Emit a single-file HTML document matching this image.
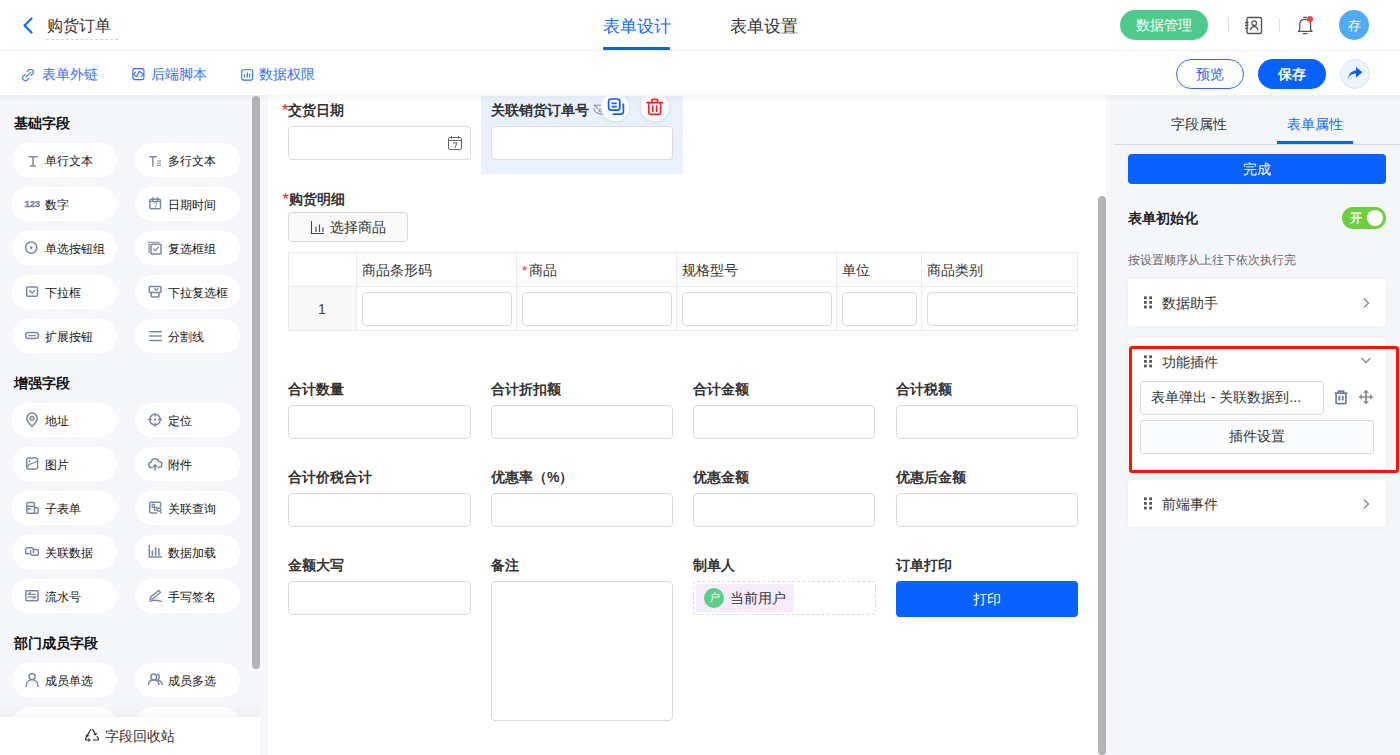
<!DOCTYPE html>
<html><head><meta charset="utf-8">
<style>
*{box-sizing:border-box;margin:0;padding:0}
html,body{width:1400px;height:755px;overflow:hidden;background:#fff;font-family:"Liberation Sans",sans-serif;color:#333}
.a{position:absolute}
.t{position:absolute;white-space:nowrap;line-height:1}
#hdr{left:0;top:0;width:1400px;height:51px;background:#fff;border-bottom:1px solid #f0f0f0}
#tb{left:0;top:51px;width:1400px;height:44px;background:#fff}
#left{left:0;top:95px;width:268px;height:660px;background:#f5f6fa}
#canvas{left:268px;top:95px;width:838px;height:660px;background:#fff;overflow:hidden}
#right{left:1106px;top:95px;width:294px;height:660px;background:#f5f6fa}
#shadow{left:0;top:95px;width:1400px;height:8px;background:linear-gradient(rgba(0,0,0,0.03),rgba(0,0,0,0))}
.pill{position:absolute;width:105px;height:34px;border-radius:17px;background:#fff}
.pill .ic{position:absolute;left:12px;top:9px;width:16px;height:16px}
.pill span{position:absolute;left:33px;top:11px;font-size:12px;line-height:14px;color:#151515;white-space:nowrap}
.sec{position:absolute;left:14px;font-size:14px;font-weight:bold;color:#111;line-height:14px}
.lbl{position:absolute;font-size:14px;font-weight:bold;color:#333;line-height:14px;white-space:nowrap}
.inp{position:absolute;width:183px;height:34px;border:1px solid #dcdcdc;border-radius:4px;background:#fff}
</style></head><body>
<div id="hdr" class="a">
<svg class="a" style="left:21px;top:16px" width="14" height="19" viewBox="0 0 14 19"><path d="M10.5 2.5 L3.5 9.5 L10.5 16.5" fill="none" stroke="#1667ff" stroke-width="2.2" stroke-linecap="round" stroke-linejoin="round"/></svg>
<div class="t" style="left:47px;top:17px;font-size:16.3px;color:#333">购货订单</div>
<div class="a" style="left:46px;top:39px;width:72px;height:0;border-top:1px dashed #d4d4d4"></div>
<div class="t" style="left:603px;top:18px;font-size:16.5px;color:#1667ff">表单设计</div>
<div class="a" style="left:603px;top:47px;width:67px;height:3px;background:#0a61ff;border-radius:1px"></div>
<div class="t" style="left:730px;top:18px;font-size:16.5px;color:#333">表单设置</div>
<div class="a" style="left:1120px;top:10px;width:88px;height:30px;border-radius:15px;background:#4ecb8b"></div>
<div class="t" style="left:1136px;top:18px;font-size:14px;color:#fff">数据管理</div>
<div class="a" style="left:1228px;top:18px;width:1px;height:14px;background:#e0e0e0"></div>
<div class="a" style="left:1279px;top:18px;width:1px;height:14px;background:#e0e0e0"></div>
<div class="a" style="left:1339px;top:10px;width:30px;height:30px;border-radius:15px;background:#4eabf4"></div>
<div class="t" style="left:1347.5px;top:19px;font-size:13px;color:#fff">存</div>
<svg class="a" style="left:1240px;top:12px" width="26" height="26" viewBox="0 0 26 26"><rect x="7" y="5.5" width="14.5" height="16" rx="1.5" fill="none" stroke="#555" stroke-width="1.4"/><path d="M5 10.5h3.5M5 13.4h3.5M5 16.4h3.5" stroke="#555" stroke-width="1.3"/><circle cx="14.2" cy="11.2" r="2.3" fill="none" stroke="#555" stroke-width="1.3"/><path d="M10.6 18.2c0.3-2.2 1.6-3.6 3.6-3.6s3.3 1.4 3.6 3.6" fill="none" stroke="#555" stroke-width="1.3"/></svg>
<svg class="a" style="left:1292px;top:12px" width="26" height="26" viewBox="0 0 26 26"><g fill="none" stroke="#555" stroke-width="1.3" stroke-linecap="round" stroke-linejoin="round"><path d="M11.8 5.3h2.6"/><path d="M6.4 19.3Q7.8 18.4 7.8 16.4V12Q7.8 7.4 13.2 7.4Q18.6 7.4 18.6 12V16.4Q18.6 18.4 20 19.3Z"/><path d="M11.3 21.6h3.6"/></g><circle cx="18" cy="6.9" r="3" fill="#e5484d"/></svg>
</div>
<div id="tb" class="a">
<svg class="a" style="left:21px;top:17px" width="15" height="14" viewBox="0 0 15 14"><g fill="none" stroke="#3370ff" stroke-width="1.1" stroke-linecap="round"><path d="M6.2 3.6l1.6-1.6a2.7 2.7 0 0 1 3.8 3.8l-1.6 1.6"/><path d="M7.8 10.4l-1.6 1.6a2.7 2.7 0 0 1-3.8-3.8l1.6-1.6"/><path d="M5 9l4.4-4.4"/></g></svg>
<div class="t" style="left:42px;top:16px;font-size:14px;color:#3370ff">表单外链</div>
<svg class="a" style="left:131px;top:16px" width="14" height="14" viewBox="0 0 14 14"><g fill="none" stroke="#2f6cff" stroke-width="1.1" stroke-linejoin="round" stroke-linecap="round"><rect x="1.9" y="1.6" width="11" height="11" rx="1.6"/><path d="M2.2 7.4L4.6 5.2M2.2 7.4l3.4 2.2 2.8-5.4 4.2 3.2-2.6 2.2"/></g></svg>
<div class="t" style="left:151px;top:16px;font-size:14px;color:#3370ff">后端脚本</div>
<svg class="a" style="left:240px;top:16px" width="14" height="14" viewBox="0 0 14 14"><g fill="none" stroke="#2f6cff" stroke-width="1.1"><rect x="1.7" y="2.7" width="11" height="10.4" rx="1.8"/><path d="M4.5 7.4v3.2M7.3 5.4v5.2M9.6 6.8v3.8" stroke-width="1.2"/></g></svg>
<div class="t" style="left:259px;top:16px;font-size:14px;color:#3370ff">数据权限</div>
<div class="a" style="left:1176px;top:8px;width:68px;height:30px;border-radius:15px;border:1px solid #2f6cf6;background:#fff"></div>
<div class="t" style="left:1196px;top:16px;font-size:14px;color:#2563f5">预览</div>
<div class="a" style="left:1258px;top:8px;width:68px;height:30px;border-radius:15px;background:#0661fd"></div>
<div class="t" style="left:1278px;top:16px;font-size:14px;color:#fff;font-weight:bold">保存</div>
<div class="a" style="left:1340px;top:8px;width:30px;height:30px;border-radius:15px;background:#eef4fe;border:1px solid #d6e4fc"></div>
<svg class="a" style="left:1346px;top:15px" width="18" height="16" viewBox="0 0 18 16"><path d="M2 14.4C2.4 9.8 5.6 7.6 10 7.6V11.6L16.4 6.2 10 0.9V4.4C4.8 4.8 2 8.6 2 14.4Z" fill="#0a5cff"/></svg>
</div>
<div id="left" class="a">
<div class="sec" style="top:21px">基础字段</div>
<div class="pill" style="left:12px;top:48px"><svg class="ic" width="16" height="16" viewBox="0 0 16 16"><g fill="none" stroke="#7b89a2" stroke-width="1.5" stroke-linecap="round" stroke-linejoin="round"><path d="M5 4.8h8M9 4.8v9.2M6.6 14h4.8"/></g></svg><span>单行文本</span></div>
<div class="pill" style="left:135px;top:48px"><svg class="ic" width="16" height="16" viewBox="0 0 16 16"><g fill="none" stroke="#7b89a2" stroke-width="1.5" stroke-linecap="round" stroke-linejoin="round"><path d="M2.6 4.8h6.6M5.9 4.8v9.2" stroke-width="1.4"/><path d="M10.6 9h3.2M10.6 11.2h3.2M10.6 13.4h3.2" stroke-width="1"/></g></svg><span>多行文本</span></div>
<div class="pill" style="left:12px;top:92px"><svg class="ic" width="16" height="16" viewBox="0 0 16 16"><text x="0.4" y="11.4" font-family="Liberation Sans" font-weight="700" font-size="9.6" fill="#7b89a2" stroke="#7b89a2" stroke-width="0.35" letter-spacing="-0.1">123</text></svg><span>数字</span></div>
<div class="pill" style="left:135px;top:92px"><svg class="ic" width="16" height="16" viewBox="0 0 16 16"><g fill="none" stroke="#7b89a2" stroke-width="1.5" stroke-linecap="round" stroke-linejoin="round"><rect x="2.9" y="3.2" width="10.6" height="9.6" rx="1.4"/><path d="M2.9 5.4h10.6" stroke-width="1.2"/><path d="M5.9 1.8v3M10.4 1.8v3" stroke-width="1.4"/><path d="M6.6 6.8h3.2L8.2 11.6" stroke-width="1.1" stroke-opacity="0.8"/></g></svg><span>日期时间</span></div>
<div class="pill" style="left:12px;top:136px"><svg class="ic" width="16" height="16" viewBox="0 0 16 16"><g fill="none" stroke="#7b89a2" stroke-width="1.5" stroke-linecap="round" stroke-linejoin="round"><circle cx="7.2" cy="7.6" r="5.6"/></g><circle cx="7.2" cy="7.6" r="1.4" fill="#7b89a2"/></svg><span>单选按钮组</span></div>
<div class="pill" style="left:135px;top:136px"><svg class="ic" width="16" height="16" viewBox="0 0 16 16"><g fill="none" stroke="#7b89a2" stroke-width="1.5" stroke-linecap="round" stroke-linejoin="round"><path d="M2 12.6V2.2h10.4" stroke-width="1.1"/><rect x="4" y="4.2" width="10" height="9.8" rx="0.8"/><path d="M6.4 8.8l1.8 1.8 3.4-3.6" stroke-width="1.1"/></g></svg><span>复选框组</span></div>
<div class="pill" style="left:12px;top:180px"><svg class="ic" width="16" height="16" viewBox="0 0 16 16"><g fill="none" stroke="#7b89a2" stroke-width="1.5" stroke-linecap="round" stroke-linejoin="round"><rect x="2.7" y="2.9" width="10.8" height="9.3" rx="1"/><path d="M5.6 6.4L8.1 8.9 10.6 6.4" stroke-width="1.4"/></g></svg><span>下拉框</span></div>
<div class="pill" style="left:135px;top:180px"><svg class="ic" width="16" height="16" viewBox="0 0 16 16"><g fill="none" stroke="#7b89a2" stroke-width="1.5" stroke-linecap="round" stroke-linejoin="round"><rect x="2.2" y="2.6" width="11.8" height="5.8" rx="1.2"/><path d="M4.2 8.4v3.6a1 1 0 0 0 1 1h5.8a1 1 0 0 0 1-1V8.4"/><path d="M7.8 4.8l1.5 1.5 1.5-1.5" stroke-width="1.3"/></g></svg><span>下拉复选框</span></div>
<div class="pill" style="left:12px;top:224px"><svg class="ic" width="16" height="16" viewBox="0 0 16 16"><g fill="none" stroke="#7b89a2" stroke-width="1.5" stroke-linecap="round" stroke-linejoin="round"><rect x="1.6" y="4.6" width="12.9" height="6" rx="3"/><path d="M4.6 7.65h7" stroke-width="1.4"/></g></svg><span>扩展按钮</span></div>
<div class="pill" style="left:135px;top:224px"><svg class="ic" width="16" height="16" viewBox="0 0 16 16"><g fill="none" stroke="#7b89a2" stroke-width="1.5" stroke-linecap="round" stroke-linejoin="round" stroke-linecap="butt"><path d="M2.6 3.7h11.8M2.6 12.4h11.8" stroke-width="1.5"/><path d="M2.8 8.07h2.9M7 8.07h2.7M11.2 8.07h3" stroke-width="1.5"/></g></svg><span>分割线</span></div>
<div class="sec" style="top:281px">增强字段</div>
<div class="pill" style="left:12px;top:308px"><svg class="ic" width="16" height="16" viewBox="0 0 16 16"><g fill="none" stroke="#7b89a2" stroke-width="1.5" stroke-linecap="round" stroke-linejoin="round"><path d="M8 14.4C5 11.6 2.8 8.9 2.8 6.3a5.2 5.2 0 0 1 10.4 0c0 2.6-2.2 5.3-5.2 8.1z"/><circle cx="8" cy="6.3" r="1.9"/></g></svg><span>地址</span></div>
<div class="pill" style="left:135px;top:308px"><svg class="ic" width="16" height="16" viewBox="0 0 16 16"><g fill="none" stroke="#7b89a2" stroke-width="1.5" stroke-linecap="round" stroke-linejoin="round"><circle cx="8" cy="7.6" r="5.3"/><path d="M8 1.4v2.6M8 11.2v3M1.4 7.6h3M11.4 7.6h3.2"/></g><rect x="7" y="6.6" width="2" height="2" fill="#7b89a2"/></svg><span>定位</span></div>
<div class="pill" style="left:12px;top:352px"><svg class="ic" width="16" height="16" viewBox="0 0 16 16"><g fill="none" stroke="#7b89a2" stroke-width="1.5" stroke-linecap="round" stroke-linejoin="round"><rect x="2.7" y="1.9" width="10.9" height="11" rx="2"/><path d="M3.4 10.6C4.6 8.6 5.6 7.6 8 7.3S11 6.6 12.4 5.4" stroke-width="1.3"/></g><circle cx="5.5" cy="5.2" r="1" fill="#7b89a2"/></svg><span>图片</span></div>
<div class="pill" style="left:135px;top:352px"><svg class="ic" width="16" height="16" viewBox="0 0 16 16"><g fill="none" stroke="#7b89a2" stroke-width="1.5" stroke-linecap="round" stroke-linejoin="round"><path d="M5.2 11.5H4.6A2.6 2.6 0 0 1 4.2 6.3A3.9 3.9 0 0 1 11.8 5.4A3 3 0 0 1 11.8 11.5H11"/><path d="M8.07 13.9V8.8M6.5 10.4L8.07 8.8 9.6 10.4"/></g></svg><span>附件</span></div>
<div class="pill" style="left:12px;top:396px"><svg class="ic" width="16" height="16" viewBox="0 0 16 16"><g fill="none" stroke="#7b89a2" stroke-width="1.5" stroke-linecap="round" stroke-linejoin="round"><rect x="2.9" y="2.4" width="7.6" height="10.8" rx="1"/><path d="M2.9 6.3h7.6M3.4 8.9h3.2"/><path d="M10.5 7.8h2.7a1 1 0 0 1 1 1v3.4a1 1 0 0 1-1 1h-2.7"/></g></svg><span>子表单</span></div>
<div class="pill" style="left:135px;top:396px"><svg class="ic" width="16" height="16" viewBox="0 0 16 16"><g fill="none" stroke="#7b89a2" stroke-width="1.5" stroke-linecap="round" stroke-linejoin="round"><path d="M9.6 12.9H3.8a1 1 0 0 1-1-1V3.2a1 1 0 0 1 1-1H12.6a1 1 0 0 1 1 1V6.7"/><rect x="5.2" y="4.3" width="2.3" height="3" stroke-width="1.2"/><rect x="7.5" y="7.3" width="2.4" height="2.8" stroke-width="1.2"/><circle cx="12.1" cy="9.7" r="1.7" stroke-width="1.3"/><path d="M13.2 11.1l1 1.8" stroke-width="1.3"/></g></svg><span>关联查询</span></div>
<div class="pill" style="left:12px;top:440px"><svg class="ic" width="16" height="16" viewBox="0 0 16 16"><g fill="none" stroke="#7b89a2" stroke-width="1.5" stroke-linecap="round" stroke-linejoin="round"><path d="M5 9.8H3.4A1.8 1.8 0 0 1 1.6 8V5.6A1.8 1.8 0 0 1 3.4 3.8H7.6A1.8 1.8 0 0 1 9.4 5.6V8.6"/><path d="M9.4 5.6H12.6A1.8 1.8 0 0 1 14.4 7.4V9.4A1.8 1.8 0 0 1 12.6 11.2H8.4A1.8 1.8 0 0 1 6.6 9.4V6.6"/></g></svg><span>关联数据</span></div>
<div class="pill" style="left:135px;top:440px"><svg class="ic" width="16" height="16" viewBox="0 0 16 16"><g fill="none" stroke="#7b89a2" stroke-width="1.5" stroke-linecap="round" stroke-linejoin="round"><path d="M2.3 1.6v11.5h12.4"/><path d="M5.4 7v4.2M8.6 3.9v7.3M11.8 4.9v6.3" stroke-width="1.6"/></g></svg><span>数据加载</span></div>
<div class="pill" style="left:12px;top:484px"><svg class="ic" width="16" height="16" viewBox="0 0 16 16"><g fill="none" stroke="#7b89a2" stroke-width="1.5" stroke-linecap="round" stroke-linejoin="round"><rect x="1.9" y="2.7" width="12.1" height="10" rx="0.6"/><path d="M4.2 6.3H11.8M4.2 6.3L6.6 4.6M4.2 8.9H11.8L9.2 10.6" stroke-width="1.3"/></g></svg><span>流水号</span></div>
<div class="pill" style="left:135px;top:484px"><svg class="ic" width="16" height="16" viewBox="0 0 16 16"><g fill="none" stroke="#7b89a2" stroke-width="1.5" stroke-linecap="round" stroke-linejoin="round"><path d="M3 11.4L3.78 8.89 11.78 2.39 13.42 4.41 5.42 10.91Z" stroke-width="1.35"/><path d="M2.6 13.3C5.5 12 9.5 11.8 14.2 13.3" stroke-width="1.35"/></g></svg><span>手写签名</span></div>
<div class="sec" style="top:541px">部门成员字段</div>
<div class="pill" style="left:12px;top:568px"><svg class="ic" width="16" height="16" viewBox="0 0 16 16"><g fill="none" stroke="#7b89a2" stroke-width="1.5" stroke-linecap="round" stroke-linejoin="round"><circle cx="8.07" cy="4.6" r="3"/><path d="M2.1 14.2C2.1 10.2 4.8 7.8 8.07 7.8S14 10.2 14 14.2"/></g></svg><span>成员单选</span></div>
<div class="pill" style="left:135px;top:568px"><svg class="ic" width="16" height="16" viewBox="0 0 16 16"><g fill="none" stroke="#7b89a2" stroke-width="1.5" stroke-linecap="round" stroke-linejoin="round"><circle cx="6.7" cy="5" r="2.9"/><path d="M1.5 12.4C1.5 9.6 3.8 7.9 6.7 7.9S11.9 9.6 11.9 12.4"/><path d="M10.4 2.3a2.9 2.9 0 0 1 0.2 5.4M11.8 8.4C13.8 9.1 15 10.5 15 12.4"/></g></svg><span>成员多选</span></div>
<div class="pill" style="left:12px;top:612px"></div>
<div class="pill" style="left:135px;top:612px"></div>
<div class="a" style="left:252px;top:1px;width:8px;height:573px;border-radius:4px;background:#b4b4b4"></div>
<div class="a" style="left:0;top:610px;width:260px;height:12px;background:linear-gradient(rgba(0,0,0,0),rgba(0,0,0,0.03))"></div>
<div class="a" style="left:0;top:622px;width:260px;height:38px;background:#fff"></div>
<svg class="a" style="left:84px;top:633px" width="16" height="14" viewBox="0 0 16 14"><g fill="none" stroke="#333" stroke-width="1.15" stroke-linecap="round" stroke-linejoin="round"><path d="M6.8 1.4L1.6 10.4Q1.2 12 2.8 12H5.6"/><path d="M4.6 10.8l1.2 1.2-1.2 1.1"/><path d="M8.6 1.4l3 5.2"/><path d="M10.2 6.4l1.5 0.3 0.5-1.5"/><path d="M13 8.6l1.4 1.8Q15 12 13.4 12H9.2"/><path d="M2.2 7l0.9 1.3 1.4-0.6"/></g></svg>
<div class="t" style="left:105px;top:634px;font-size:14px;color:#333">字段回收站</div>
</div>
<div id="canvas" class="a">
<div class="a" style="left:213px;top:1px;width:202px;height:78px;background:#eaf1fd"></div>
<div class="t" style="left:13.699999999999989px;top:6.5px;font-size:17px;color:#f5222d">*</div><div class="lbl" style="left:20px;top:8px">交货日期</div>
<div class="inp" style="left:20px;top:31px;width:183px;height:34px;"></div>
<svg class="a" style="left:179px;top:40px" width="16" height="16" viewBox="0 0 16 16"><g fill="none" stroke="#666" stroke-width="1"><rect x="1.5" y="2.5" width="13" height="12" rx="1.5"/><path d="M1.5 5.5h13M4.5 1v2.5M11.5 1v2.5"/><path d="M6 8h4l-2.2 5" stroke-width="1"/></g></svg>
<div class="lbl" style="left:223px;top:8px">关联销货订单号</div>
<div class="inp" style="left:223px;top:31px;width:182px;height:34px;"></div>
<svg class="a" style="left:324px;top:8px" width="12" height="13" viewBox="0 0 12 13"><g fill="none" stroke="#8a94a8" stroke-width="1.1" stroke-linecap="round"><path d="M2 2.2L9 2.2M2 2.2L5.6 5.4"/><path d="M1.8 5.2C2.2 9.2 5.8 11 10.8 11.2"/><circle cx="8.4" cy="7.6" r="1.4"/></g></svg>
<div class="a" style="left:333.4px;top:-1.6px;width:27.6px;height:27.6px;border-radius:50%;background:#fff;box-shadow:0 1px 4px rgba(30,80,200,0.12)"></div>
<svg class="a" style="left:336.5px;top:1.2px" width="22" height="22" viewBox="0 0 22 22"><g fill="none" stroke="#0f5fff" stroke-width="1.7" stroke-linecap="round" stroke-linejoin="round"><rect x="3.6" y="3" width="11.2" height="11.2" rx="2.4"/><path d="M7.2 7.4h4M7.2 10.6h4" stroke-width="1.6"/><path d="M18.4 8.4v7.2a2.6 2.6 0 0 1-2.6 2.6H8.4"/></g></svg>
<div class="a" style="left:373.1px;top:-1.6px;width:27.6px;height:27.6px;border-radius:50%;background:#fff;box-shadow:0 1px 4px rgba(30,80,200,0.12)"></div>
<svg class="a" style="left:376.2px;top:1.2px" width="22" height="22" viewBox="0 0 22 22"><g fill="none" stroke="#f5222d" stroke-width="1.7" stroke-linecap="round" stroke-linejoin="round"><path d="M3 6.6h15.4"/><path d="M7.8 6.6V4.4a1 1 0 0 1 1-1h3.8a1 1 0 0 1 1 1v2.2"/><path d="M4.8 6.6v10.2a1.6 1.6 0 0 0 1.6 1.6h8.6a1.6 1.6 0 0 0 1.6-1.6V6.6"/><path d="M8.8 10v5.2M12.6 10v5.2"/></g></svg>
<div class="t" style="left:14.199999999999989px;top:95.5px;font-size:17px;color:#f5222d">*</div><div class="lbl" style="left:20.5px;top:97px">购货明细</div>
<div class="a" style="left:20px;top:117px;width:120px;height:30px;border:1px solid #dcdcdc;border-radius:4px;background:#f9f9f9"></div>
<svg class="a" style="left:41px;top:124px" width="17" height="16" viewBox="0 0 17 16"><g fill="none" stroke="#444" stroke-width="1.1"><path d="M2.5 2v12.5H15"/><path d="M7 7.5v5.5M10.5 5.5v7.5M14 8.5v4.5"/></g></svg>
<div class="t" style="left:62px;top:125px;font-size:14px;color:#333">选择商品</div>
<div class="a" style="left:20px;top:157px;width:790px;height:79px;border:1px solid #ebebeb"></div>
<div class="a" style="left:21px;top:192px;width:67px;height:43px;background:#f8f8f8"></div>
<div class="a" style="left:20px;top:191px;width:790px;height:1px;background:#ebebeb"></div>
<div class="a" style="left:88px;top:157px;width:1px;height:79px;background:#ebebeb"></div>
<div class="a" style="left:248px;top:157px;width:1px;height:79px;background:#ebebeb"></div>
<div class="a" style="left:408px;top:157px;width:1px;height:79px;background:#ebebeb"></div>
<div class="a" style="left:568px;top:157px;width:1px;height:79px;background:#ebebeb"></div>
<div class="a" style="left:653px;top:157px;width:1px;height:79px;background:#ebebeb"></div>
<div class="t" style="left:94px;top:168px;font-size:14px;color:#333">商品条形码</div>
<div class="inp" style="left:94px;top:197px;width:150px;height:34px;"></div>
<div class="t" style="left:254px;top:169px;font-size:13px;color:#f5222d">*</div>
<div class="t" style="left:260.5px;top:168px;font-size:14px;color:#333">商品</div>
<div class="inp" style="left:254px;top:197px;width:150px;height:34px;"></div>
<div class="t" style="left:414px;top:168px;font-size:14px;color:#333">规格型号</div>
<div class="inp" style="left:414px;top:197px;width:150px;height:34px;"></div>
<div class="t" style="left:574px;top:168px;font-size:14px;color:#333">单位</div>
<div class="inp" style="left:574px;top:197px;width:75px;height:34px;"></div>
<div class="t" style="left:659px;top:168px;font-size:14px;color:#333">商品类别</div>
<div class="inp" style="left:659px;top:197px;width:151px;height:34px;"></div>
<div class="t" style="left:50px;top:207px;font-size:14px;color:#444">1</div>
<div class="lbl" style="left:20px;top:287px">合计数量</div>
<div class="inp" style="left:20px;top:310px;width:183px;height:34px;"></div>
<div class="lbl" style="left:223px;top:287px">合计折扣额</div>
<div class="inp" style="left:223px;top:310px;width:182px;height:34px;"></div>
<div class="lbl" style="left:425px;top:287px">合计金额</div>
<div class="inp" style="left:425px;top:310px;width:182px;height:34px;"></div>
<div class="lbl" style="left:628px;top:287px">合计税额</div>
<div class="inp" style="left:628px;top:310px;width:182px;height:34px;"></div>
<div class="lbl" style="left:20px;top:375px">合计价税合计</div>
<div class="inp" style="left:20px;top:398px;width:183px;height:34px;"></div>
<div class="lbl" style="left:223px;top:375px">优惠率（%）</div>
<div class="inp" style="left:223px;top:398px;width:182px;height:34px;"></div>
<div class="lbl" style="left:425px;top:375px">优惠金额</div>
<div class="inp" style="left:425px;top:398px;width:182px;height:34px;"></div>
<div class="lbl" style="left:628px;top:375px">优惠后金额</div>
<div class="inp" style="left:628px;top:398px;width:182px;height:34px;"></div>
<div class="lbl" style="left:20px;top:463px">金额大写</div>
<div class="inp" style="left:20px;top:486px;width:183px;height:34px;"></div>
<div class="lbl" style="left:223px;top:463px">备注</div>
<div class="inp" style="left:223px;top:486px;width:182px;height:140px;"></div>
<div class="lbl" style="left:425px;top:463px">制单人</div>
<div class="a" style="left:425px;top:486px;width:183px;height:34px;border:1px dashed #dcdcdc;border-radius:4px"></div>
<div class="a" style="left:428px;top:489px;width:98px;height:28px;background:#f5ebfd;border-radius:2px"></div>
<div class="a" style="left:436px;top:493px;width:20px;height:20px;border-radius:50%;background:#5bcf86"></div>
<div class="t" style="left:440.5px;top:497px;font-size:11px;color:#fff">户</div>
<div class="t" style="left:462px;top:496px;font-size:14px;color:#333">当前用户</div>
<div class="lbl" style="left:628px;top:463px">订单打印</div>
<div class="a" style="left:628px;top:486px;width:182px;height:36px;border-radius:4px;background:#0a62fe"></div>
<div class="t" style="left:705px;top:497px;font-size:14px;color:#fff">打印</div>
<div class="a" style="left:830px;top:101px;width:8px;height:559px;border-radius:4px;background:#b4b4b4"></div>
</div>
<div id="right" class="a">
<div class="t" style="left:65px;top:22px;font-size:14px;color:#333">字段属性</div>
<div class="t" style="left:181px;top:22px;font-size:14px;color:#1667ff">表单属性</div>
<div class="a" style="left:8px;top:49px;width:286px;height:1px;background:#dcdfe6"></div>
<div class="a" style="left:171px;top:46px;width:76px;height:3px;background:#0a61ff"></div>
<div class="a" style="left:22px;top:59px;width:258px;height:30px;border-radius:4px;background:#0661fd"></div>
<div class="t" style="left:137px;top:67px;font-size:14px;color:#fff">完成</div>
<div class="lbl" style="left:22px;top:116px;color:#222">表单初始化</div>
<div class="a" style="left:236px;top:112px;width:44px;height:22px;border-radius:11px;background:#6ccf3f"></div>
<div class="a" style="left:261px;top:115px;width:16px;height:16px;border-radius:50%;background:#fff"></div>
<div class="t" style="left:244px;top:116.5px;font-size:12px;color:#fff;font-weight:bold">开</div>
<div class="t" style="left:22px;top:158.5px;font-size:12px;color:#666">按设置顺序从上往下依次执行完</div>
<div class="a" style="left:22px;top:184px;width:258px;height:47px;border-radius:4px;background:#fff;box-shadow:0 0 6px rgba(0,0,0,0.04)"></div><svg class="a" style="left:37px;top:201px" width="10" height="14" viewBox="0 0 10 14"><g fill="#555"><rect x="1" y="0.4" width="2.8" height="2.8"/><rect x="6.2" y="0.4" width="2.8" height="2.8"/><rect x="1" y="5" width="2.8" height="2.8"/><rect x="6.2" y="5" width="2.8" height="2.8"/><rect x="1" y="9.6" width="2.8" height="2.8"/><rect x="6.2" y="9.6" width="2.8" height="2.8"/></g></svg><div class="t" style="left:56px;top:201px;font-size:14px;color:#333">数据助手</div>
<svg class="a" style="left:255px;top:201px" width="10" height="14" viewBox="0 0 10 14"><path d="M3 2.5l4.5 4.5L3 11.5" fill="none" stroke="#888" stroke-width="1.3"/></svg>
<div class="a" style="left:22px;top:243px;width:258px;height:130px;border-radius:4px;background:#fff;box-shadow:0 0 6px rgba(0,0,0,0.04)"></div><svg class="a" style="left:37px;top:260px" width="10" height="14" viewBox="0 0 10 14"><g fill="#555"><rect x="1" y="0.4" width="2.8" height="2.8"/><rect x="6.2" y="0.4" width="2.8" height="2.8"/><rect x="1" y="5" width="2.8" height="2.8"/><rect x="6.2" y="5" width="2.8" height="2.8"/><rect x="1" y="9.6" width="2.8" height="2.8"/><rect x="6.2" y="9.6" width="2.8" height="2.8"/></g></svg><div class="t" style="left:56px;top:260px;font-size:14px;color:#333">功能插件</div>
<svg class="a" style="left:253px;top:260px" width="14" height="10" viewBox="0 0 14 10"><path d="M2.5 3l4.5 4.5L11.5 3" fill="none" stroke="#888" stroke-width="1.3"/></svg>
<div class="a" style="left:34px;top:286px;width:184px;height:34px;border:1px solid #dcdcdc;border-radius:4px;background:#fff"></div>
<div class="t" style="left:45px;top:295px;font-size:14px;color:#333">表单弹出 - 关联数据到...</div>
<svg class="a" style="left:227px;top:294px" width="16" height="16" viewBox="0 0 16 16"><g fill="none" stroke="#6e7fa0" stroke-width="1.7" stroke-linejoin="round"><path d="M1.6 4.2h12.8M5.4 4.2V2.2h5.2v2"/><path d="M3.1 4.2v9.6a0.8 0.8 0 0 0 0.8 0.8h8.2a0.8 0.8 0 0 0 0.8-0.8V4.2"/><path d="M6.3 6.8v4.8M9.7 6.8v4.8" stroke-width="1.9"/></g></svg>
<svg class="a" style="left:252px;top:294px" width="16" height="16" viewBox="0 0 16 16"><g fill="none" stroke="#8a8a8a" stroke-width="1.7"><path d="M8 2.5v11M2.5 8h11"/></g><g fill="#8a8a8a"><path d="M8 0.8l3 3H5z M8 15.2l3-3H5z M0.8 8l3-3v6z M15.2 8l-3-3v6z"/></g></svg>
<div class="a" style="left:34px;top:325px;width:234px;height:34px;border:1px solid #dcdcdc;border-radius:2px;background:#fbfcfd"></div>
<div class="t" style="left:123px;top:334px;font-size:14px;color:#333">插件设置</div>
<div class="a" style="left:23px;top:251px;width:270px;height:126.5px;border:3px solid #ff1200;border-radius:3px"></div>
<div class="a" style="left:22px;top:385px;width:258px;height:47px;border-radius:4px;background:#fff;box-shadow:0 0 6px rgba(0,0,0,0.04)"></div><svg class="a" style="left:37px;top:402px" width="10" height="14" viewBox="0 0 10 14"><g fill="#555"><rect x="1" y="0.4" width="2.8" height="2.8"/><rect x="6.2" y="0.4" width="2.8" height="2.8"/><rect x="1" y="5" width="2.8" height="2.8"/><rect x="6.2" y="5" width="2.8" height="2.8"/><rect x="1" y="9.6" width="2.8" height="2.8"/><rect x="6.2" y="9.6" width="2.8" height="2.8"/></g></svg><div class="t" style="left:56px;top:402px;font-size:14px;color:#333">前端事件</div>
<svg class="a" style="left:255px;top:402px" width="10" height="14" viewBox="0 0 10 14"><path d="M3 2.5l4.5 4.5L3 11.5" fill="none" stroke="#888" stroke-width="1.3"/></svg>
</div>
<div id="shadow" class="a"></div>
</body></html>
